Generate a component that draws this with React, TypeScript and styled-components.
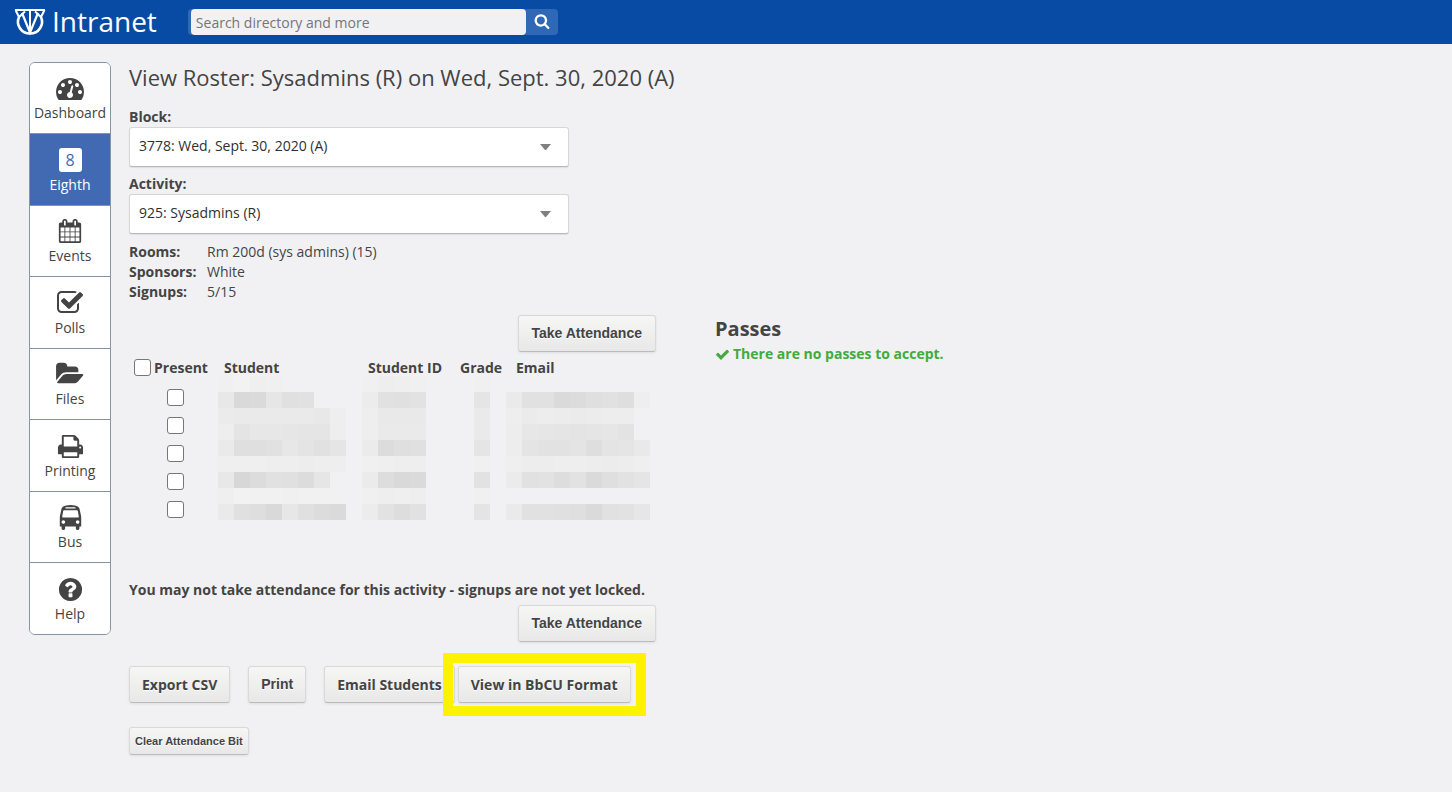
import React from "react";
import styled, { createGlobalStyle, css } from "styled-components";

const GlobalStyle = createGlobalStyle`
  *, *::before, *::after { box-sizing: border-box; }
  body {
    margin: 0;
    background: #f1f1f4;
    color: #444;
    font: 14px/20px "Open Sans", sans-serif;
  }
`;

const Header = styled.header`
  display: flex;
  align-items: center;
  gap: 31px;
  height: 44px;
  padding: 0 14px;
  background: #084ba5;
`;

const Brand = styled.a`
  display: flex;
  align-items: center;
  gap: 6px;
  padding-bottom: 3px;
  color: #fff;
  font-size: 28px;
  line-height: 40px;
  text-decoration: none;
  svg { margin-top: 3px; }
`;

const SearchForm = styled.form`
  display: flex;
  height: 26px;
  padding-left: 3px;
  border-radius: 4px;
  background: #2f68b4;
`;

const SearchInput = styled.input`
  width: 335px;
  padding: 2px 5px 0;
  border: 0;
  border-radius: 4px;
  background: #f1f1f4;
  color: #444;
  font: inherit;
  &::placeholder { color: #757575; opacity: 1; }
`;

const SearchButton = styled.button`
  display: flex;
  align-items: center;
  justify-content: center;
  width: 32px;
  padding: 0 0 3px;
  border: 0;
  background: none;
  color: #fff;
`;

const Page = styled.div`
  display: flex;
  align-items: flex-start;
  gap: 18px;
  padding: 18px 29px;
`;

const Sidebar = styled.nav`
  flex: none;
  width: 82px;
  overflow: hidden;
  border: 1px solid #8794a3;
  border-radius: 6px;
  background: #fff;
`;

const NavItem = styled.a<{ $active?: boolean }>`
  display: flex;
  flex-direction: column;
  align-items: center;
  gap: 1px;
  height: 71px;
  padding-top: 11px;
  border-top: 1px solid #8794a3;
  color: ${(p) => (p.$active ? "#fff" : "#444")};
  background: ${(p) => (p.$active ? "#416ab3" : "#fff")};
  text-decoration: none;
  &:nth-child(even) { height: 72px; padding-top: 12px; }
  &:first-child { height: 70px; border-top: 0; }
`;

const NavIcon = styled.span`
  display: flex;
  align-items: center;
  justify-content: center;
  height: 28px;
`;

const EighthBadge = styled.span`
  width: 23px;
  border-radius: 3px;
  background: #fff;
  color: #416ab3;
  font-size: 16px;
  line-height: 24px;
  text-align: center;
`;

const Main = styled.main`
  flex: 1;
  min-width: 0;
`;

const Title = styled.h2`
  margin: 0 0 15px;
  font-size: 22px;
  font-weight: 400;
  line-height: 30px;
`;

const Field = styled.div`
  width: 440px;
  margin-bottom: 7px;
`;

const FieldLabel = styled.label`
  display: block;
  font-weight: 700;
`;

const SelectWrap = styled.div`
  display: grid;
  align-items: center;
  svg { grid-area: 1 / 1; justify-self: end; margin-right: 18px; pointer-events: none; }
`;

const Select = styled.select`
  grid-area: 1 / 1;
  width: 100%;
  height: 40px;
  padding: 0 40px 2px 9px;
  appearance: none;
  border: 1px solid #d6d6d6;
  border-bottom-color: #b8b8b8;
  border-radius: 3px;
  background: #fff;
  box-shadow: 0 1px 1px rgba(0, 0, 0, 0.08);
  color: #303030;
  font: inherit;
`;

const Details = styled.dl`
  display: grid;
  grid-template-columns: 78px auto;
  margin: 0 0 13px;
  padding-top: 1px;
  dt { font-weight: 700; }
  dd { margin: 0; }
`;

const Columns = styled.div`
  display: flex;
  gap: 59px;
`;

const Roster = styled.section`
  width: 527px;
`;

const buttonLook = css<{ $small?: boolean }>`
  display: inline-flex;
  align-items: center;
  justify-content: center;
  height: ${(p) => (p.$small ? 28 : 37)}px;
  padding: ${(p) => (p.$small ? "0 5px 1px" : "0 12px 1px")};
  border: 1px solid #d9d9d9;
  border-bottom-color: #bbb;
  border-radius: 3px;
  background: linear-gradient(#f6f6f4, #e8e8e8);
  box-shadow: 0 1px 3px rgba(0, 0, 0, 0.08);
  color: #444;
  font-weight: 700;
  text-shadow: 0 1px #fff;
  white-space: nowrap;
`;

const Button = styled.button<{ $small?: boolean }>`
  ${buttonLook}
  font-family: "Liberation Sans", Arial, sans-serif;
  font-size: ${(p) => (p.$small ? 11 : 14)}px;
`;

const LinkButton = styled.a`
  ${buttonLook}
  padding: 0 12px;
  text-decoration: none;
`;

const AttendanceAction = styled.div`
  display: flex;
  justify-content: flex-end;
  ${Button} { padding: 0 13px 1px; }
`;

const TableArea = styled.div`
  position: relative;
  margin-bottom: 56px;
`;

const Table = styled.table`
  width: 100%;
  table-layout: fixed;
  border-collapse: collapse;
  th { height: 31px; padding: 0; text-align: left; white-space: nowrap; }
  td { height: 28px; padding: 0; line-height: 0; }
`;

const CheckAll = styled.label`
  display: flex;
  align-items: center;
  gap: 3px;
  padding-left: 5px;
`;

const Checkbox = styled.input`
  display: block;
  width: 17px;
  height: 17px;
  margin: 0;
  appearance: none;
  border: 1px solid #767676;
  border-radius: 3px;
  background: #fff;
  td & { margin-left: 38px; }
`;

const Redaction = styled.svg`
  position: absolute;
  left: 89px;
  top: 24px;
`;

const Notice = styled.p`
  margin: 0 0 5px;
  padding-top: 1px;
  font-weight: 700;
  white-space: nowrap;
`;

const Exports = styled.div`
  display: flex;
  flex-wrap: wrap;
  margin: 24px 0;
  & > :nth-child(-n + 2) { margin-right: 18px; }
`;

const Highlighted = styled.span`
  position: relative;
  display: inline-flex;
  margin-left: 3px;
  &::after {
    content: "";
    position: absolute;
    inset: -13px -15px;
    border: 10px solid #fff200;
    pointer-events: none;
  }
`;

const Passes = styled.section`
  padding-top: 1px;
  h3 { margin: 0 0 2px; font-size: 20px; line-height: 26px; }
`;

const PassMessage = styled.p`
  display: flex;
  align-items: center;
  gap: 3px;
  margin: 0;
  color: #42ab3c;
  font-weight: 700;
`;

const glyphs = {
  dashboard:
    "M384 1152q0-53-37.5-90.5t-90.5-37.5-90.5 37.5-37.5 90.5 37.5 90.5 90.5 37.5 90.5-37.5 37.5-90.5zm192-448q0-53-37.5-90.5t-90.5-37.5-90.5 37.5-37.5 90.5 37.5 90.5 90.5 37.5 90.5-37.5 37.5-90.5zm428 481l101-382q6-26-7.5-48.5t-38.5-29.5-48 6.5-30 39.5l-101 382q-60 5-107 43.5t-63 98.5q-20 77 20 146t117 89 146-20 89-117q16-60-6-117t-72-91zm660-33q0-53-37.5-90.5t-90.5-37.5-90.5 37.5-37.5 90.5 37.5 90.5 90.5 37.5 90.5-37.5 37.5-90.5zm-640-640q0-53-37.5-90.5t-90.5-37.5-90.5 37.5-37.5 90.5 37.5 90.5 90.5 37.5 90.5-37.5 37.5-90.5zm448 192q0-53-37.5-90.5t-90.5-37.5-90.5 37.5-37.5 90.5 37.5 90.5 90.5 37.5 90.5-37.5 37.5-90.5zm320 448q0 261-141 483-19 29-54 29h-1402q-35 0-54-29-141-221-141-483 0-182 71-348t191-286 286-191 348-71 348 71 286 191 191 286 71 348z",
  calendar:
    "M192 1664h288v-288h-288v288zm352 0h320v-288h-320v288zm-352-352h288v-320h-288v320zm352 0h320v-320h-320v320zm-352-384h288v-288h-288v288zm736 736h320v-288h-320v288zm-384-736h320v-288h-320v288zm768 736h288v-288h-288v288zm-384-352h320v-320h-320v320zm-352-864v-288q0-13-9.5-22.5t-22.5-9.5h-64q-13 0-22.5 9.5t-9.5 22.5v288q0 13 9.5 22.5t22.5 9.5h64q13 0 22.5-9.5t9.5-22.5zm736 864h288v-320h-288v320zm-384-384h320v-288h-320v288zm384 0h288v-288h-288v288zm32-480v-288q0-13-9.5-22.5t-22.5-9.5h-64q-13 0-22.5 9.5t-9.5 22.5v288q0 13 9.5 22.5t22.5 9.5h64q13 0 22.5-9.5t9.5-22.5zm384-64v1280q0 52-38 90t-90 38h-1408q-52 0-90-38t-38-90v-1280q0-52 38-90t90-38h128v-96q0-66 47-113t113-47h64q66 0 113 47t47 113v96h384v-96q0-66 47-113t113-47h64q66 0 113 47t47 113v96h128q52 0 90 38t38 90z",
  poll:
    "M1472 930v318q0 119-84.5 203.5t-203.5 84.5h-832q-119 0-203.5-84.5t-84.5-203.5v-832q0-119 84.5-203.5t203.5-84.5h832q63 0 117 25 15 7 18 23 3 17-9 29l-49 49q-10 10-23 10-3 0-9-2-23-6-45-6h-832q-66 0-113 47t-47 113v832q0 66 47 113t113 47h832q66 0 113-47t47-113v-254q0-13 9-22l64-64q10-10 23-10 6 0 12 3 20 8 20 29zm231-489l-814 814q-24 24-57 24t-57-24l-430-430q-24-24-24-57t24-57l110-110q24-24 57-24t57 24l263 263 647-647q24-24 57-24t57 24l110 110q24 24 24 57t-24 57z",
  folder:
    "M1815 952q0 31-31 66l-336 396q-43 51-120.5 86.5t-143.5 35.5h-1088q-34 0-60.5-13t-26.5-43q0-31 31-66l336-396q43-51 120.5-86.5t143.5-35.5h1088q34 0 60.5 13t26.5 43zm-343-344v160h-832q-94 0-197 47.5t-164 119.5l-337 396-5 6q0-4-.5-12.5t-.5-12.5v-960q0-92 66-158t158-66h320q92 0 158 66t66 158v32h544q92 0 158 66t66 158z",
  printer:
    "M448 1536h896v-256h-896v256zm0-640h896v-384h-160q-40 0-68-28t-28-68v-160h-640v640zm1152 64q0-26-19-45t-45-19-45 19-19 45 19 45 45 19 45-19 19-45zm128 0v416q0 13-9.5 22.5t-22.5 9.5h-224v160q0 40-28 68t-68 28h-960q-40 0-68-28t-28-68v-160h-224q-13 0-22.5-9.5t-9.5-22.5v-416q0-79 56.5-135.5t135.5-56.5h64v-544q0-40 28-68t68-28h672q40 0 88 20t76 48l152 152q28 28 48 76t20 88v256h64q79 0 135.5 56.5t56.5 135.5z",
  help:
    "M1024 1376v-192q0-14-9-23t-23-9h-192q-14 0-23 9t-9 23v192q0 14 9 23t23 9h192q14 0 23-9t9-23zm256-672q0-88-55.5-163t-138.5-116-170-41q-243 0-371 213-15 24 8 42l132 100q7 6 19 6 16 0 25-12 53-68 86-92 34-24 86-24 48 0 85.5 26t37.5 59q0 38-20 61t-68 45q-63 28-115.5 86.5t-52.5 125.5v36q0 14 9 23t23 9h192q14 0 23-9t9-23q0-19 21.5-49.5t54.5-49.5q32-18 49-28.5t46-35 44.5-48 28-60.5 12.5-81zm384 192q0 209-103 385.5t-279.5 279.5-385.5 103-385.5-103-279.5-279.5-103-385.5 103-385.5 279.5-279.5 385.5-103 385.5 103 279.5 279.5 103 385.5z",
  search:
    "M1216 832q0-185-131.5-316.5t-316.5-131.5-316.5 131.5-131.5 316.5 131.5 316.5 316.5 131.5 316.5-131.5 131.5-316.5zm512 832q0 52-38 90t-90 38q-54 0-90-38l-343-342q-179 124-399 124-143 0-273.5-55.5t-225-150-150-225-55.5-273.5 55.5-273.5 150-225 225-150 273.5-55.5 273.5 55.5 225 150 150 225 55.5 273.5q0 220-124 399l343 343q37 37 37 90z",
  check:
    "M1671 566q0 40-28 68l-724 724-136 136q-28 28-68 28t-68-28l-136-136-362-362q-28-28-28-68t28-68l136-136q28-28 68-28t68 28l294 295 656-657q28-28 68-28t68 28l136 136q28 28 28 68z",
  bus:
    "M512 1216q0-53-37.5-90.5t-90.5-37.5-90.5 37.5-37.5 90.5 37.5 90.5 90.5 37.5 90.5-37.5 37.5-90.5zm1024 0q0-53-37.5-90.5t-90.5-37.5-90.5 37.5-37.5 90.5 37.5 90.5 90.5 37.5 90.5-37.5 37.5-90.5zm-46-396l-72-384q-5-23-22.5-37.5t-40.5-14.5h-918q-23 0-40.5 14.5t-22.5 37.5l-72 384q-5 30 14 53t49 23h1062q30 0 49-23t14-53zm-226-612q0-20-14-34t-34-14h-640q-20 0-34 14t-14 34 14 34 34 14h640q20 0 34-14t14-34zm400 725v603h-128v128q0 53-37.5 90.5t-90.5 37.5-90.5-37.5-37.5-90.5v-128h-768v128q0 53-37.5 90.5t-90.5 37.5-90.5-37.5-37.5-90.5v-128h-128v-603q0-112 25-223l103-454q9-78 97.5-137t230-89 312.5-30 312.5 30 230 89 97.5 137l105 454q23 102 23 223z",
};

type Glyph = keyof typeof glyphs;

function Icon({ name, size }: { name: Glyph; size: number }) {
  return (
    <svg width={size} height={size} viewBox="0 0 1792 1792" fill="currentColor" overflow="visible" aria-hidden="true">
      <path d={glyphs[name]} />
    </svg>
  );
}

function Logo() {
  return (
    <svg width="32" height="28" viewBox="0 0 32 28" fill="none" stroke="#fff" strokeWidth="2" aria-hidden="true">
      <path d="M1 2h30M1.500 2L5 9l6-5.500M30.500 2L27 9l-6-5.500M16 2v22" />
      <path d="M5 9A12 11.800 0 1 0 27 9" strokeWidth="2.600" />
      <path d="M8 5l8 19.500L24 5" strokeWidth="2.200" />
    </svg>
  );
}

const navItems: { label: string; icon?: Glyph; size?: number }[] = [
  { label: "Dashboard", icon: "dashboard", size: 28 },
  { label: "Eighth" },
  { label: "Events", icon: "calendar", size: 24 },
  { label: "Polls", icon: "poll", size: 28 },
  { label: "Files", icon: "folder", size: 26 },
  { label: "Printing", icon: "printer", size: 27 },
  { label: "Bus", icon: "bus", size: 25 },
  { label: "Help", icon: "help", size: 27 },
];

/* Grey level of each mosaic cell that hides the student data; "." is an empty cell. */
const mosaic = [
  "f0 f2 ef f0 . . . . . f0 ee ef f0 . . . f0 . . . . . . . . . .",
  "e8 d9 da e6 e0 e1 . . . ec e1 e0 e2 . . . e5 . ea e1 e1 da dc df e1 de ee",
  "eb ea ea ea ea ea e8 ee . ee e9 e9 e9 . . . ea . ee eb ed ec eb ec ed ed .",
  "ee e4 e7 e7 e6 e5 e5 ee . ee ea ea ea . . . ea . ed e7 e6 e5 e4 e5 e6 e3 .",
  "ea df df e1 e7 e4 e1 e5 . eb dc df e0 . . . e5 . ed e4 e2 e2 e4 de e4 e5 e9",
  "ef ef ef ee ee ed ee ee . f0 ef ee ee . . . f0 . ef ed ed ee ee ed ec ed ef",
  "e8 d7 dc e1 e0 dc e6 . . eb dd d9 da . . . e2 . eb e1 e2 dd e2 da df e2 e5",
  "ef f2 f1 f1 f0 f1 f1 f1 . f0 ee ef ee . . . f0 . . . . . . . . . .",
  "ea e0 de d9 e7 e0 dc da . ec e2 dd e1 . . . e4 . ea e1 e1 e0 df da e1 e2 e6",
].map((row) => row.split(" "));

const columns = [
  { label: "Student", width: 144 },
  { label: "Student ID", width: 92 },
  { label: "Grade", width: 56 },
  { label: "Email", width: 140 },
];

export default function App() {
  return (
    <>
      <GlobalStyle />
      <Header>
        <Brand href="#home">
          <Logo />
          Intranet
        </Brand>
        <SearchForm role="search">
          <SearchInput type="text" aria-label="Search" placeholder="Search directory and more" />
          <SearchButton type="button" aria-label="Submit search">
            <Icon name="search" size={16} />
          </SearchButton>
        </SearchForm>
      </Header>
      <Page>
        <Sidebar aria-label="Main">
          {navItems.map(({ label, icon, size = 24 }) => (
            <NavItem key={label} href={`#${label.toLowerCase()}`} $active={!icon}>
              <NavIcon>{icon ? <Icon name={icon} size={size} /> : <EighthBadge>8</EighthBadge>}</NavIcon>
              {label}
            </NavItem>
          ))}
        </Sidebar>
        <Main>
          <Title>View Roster: Sysadmins (R) on Wed, Sept. 30, 2020 (A)</Title>
          <Field>
            <FieldLabel htmlFor="block">Block:</FieldLabel>
            <SelectWrap>
              <Select id="block">
                <option>3778: Wed, Sept. 30, 2020 (A)</option>
              </Select>
              <svg width="11" height="6" aria-hidden="true"><path d="M0 0h11L6 6H5z" fill="#808080" /></svg>
            </SelectWrap>
          </Field>
          <Field>
            <FieldLabel htmlFor="activity">Activity:</FieldLabel>
            <SelectWrap>
              <Select id="activity">
                <option>925: Sysadmins (R)</option>
              </Select>
              <svg width="11" height="6" aria-hidden="true"><path d="M0 0h11L6 6H5z" fill="#808080" /></svg>
            </SelectWrap>
          </Field>
          <Details>
            <dt>Rooms:</dt>
            <dd>Rm 200d (sys admins) (15)</dd>
            <dt>Sponsors:</dt>
            <dd>White</dd>
            <dt>Signups:</dt>
            <dd>5/15</dd>
          </Details>
          <Columns>
            <Roster>
              <AttendanceAction>
                <Button type="button">Take Attendance</Button>
              </AttendanceAction>
              <TableArea>
                <Table>
                  <colgroup>
                    <col width={95} />
                    {columns.map((c) => (
                      <col key={c.label} width={c.width} />
                    ))}
                  </colgroup>
                  <thead>
                    <tr>
                      <th>
                        <CheckAll>
                          <Checkbox type="checkbox" />
                          Present
                        </CheckAll>
                      </th>
                      {columns.map((c) => (
                        <th key={c.label}>{c.label}</th>
                      ))}
                    </tr>
                  </thead>
                  <tbody>
                    {[1, 2, 3, 4, 5].map((n) => (
                      <tr key={n}>
                        <td>
                          <Checkbox type="checkbox" aria-label={`Student ${n} present`} />
                        </td>
                        <td />
                        <td />
                        <td />
                        <td />
                      </tr>
                    ))}
                  </tbody>
                </Table>
                <Redaction width="432" height="144" shapeRendering="crispEdges" aria-hidden="true">
                  {mosaic.flatMap((row, y) =>
                    row.map((v, x) =>
                      v === "." ? null : (
                        <rect key={`${x}-${y}`} x={x * 16} y={y * 16} width="16" height="16" fill={`#${v}${v}${v}`} />
                      ),
                    ),
                  )}
                </Redaction>
              </TableArea>
              <Notice>You may not take attendance for this activity - signups are not yet locked.</Notice>
              <AttendanceAction>
                <Button type="button">Take Attendance</Button>
              </AttendanceAction>
              <Exports>
                <LinkButton href="#csv">Export CSV</LinkButton>
                <Button type="button">Print</Button>
                <LinkButton href="#email">Email Students</LinkButton>
                <Highlighted>
                  <LinkButton href="#bbcu">View in BbCU Format</LinkButton>
                </Highlighted>
              </Exports>
              <Button type="button" $small>
                Clear Attendance Bit
              </Button>
            </Roster>
            <Passes>
              <h3>Passes</h3>
              <PassMessage>
                <Icon name="check" size={15} />
                There are no passes to accept.
              </PassMessage>
            </Passes>
          </Columns>
        </Main>
      </Page>
    </>
  );
}
